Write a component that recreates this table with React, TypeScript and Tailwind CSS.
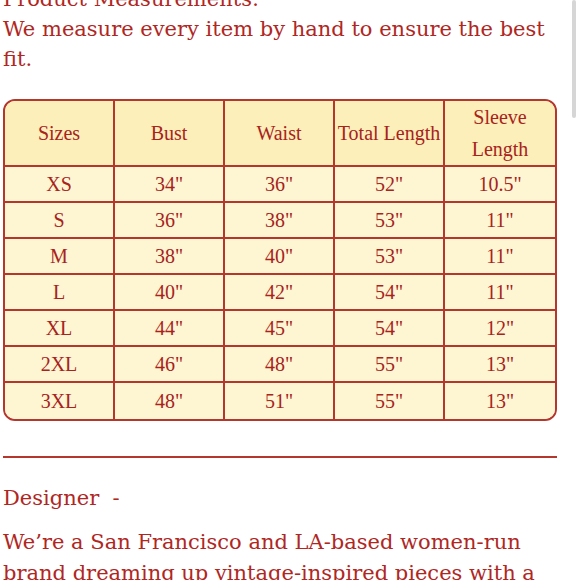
const rows = [
  ["XS", '34"', '36"', '52"', '10.5"'],
  ["S", '36"', '38"', '53"', '11"'],
  ["M", '38"', '40"', '53"', '11"'],
  ["L", '40"', '42"', '54"', '11"'],
  ["XL", '44"', '45"', '54"', '12"'],
  ["2XL", '46"', '48"', '55"', '13"'],
  ["3XL", '48"', '51"', '55"', '13"'],
]

const headers = ["Sizes", "Bust", "Waist", "Total Length", "Sleeve Length"]

const SizeTable = () => {
  return (
    <div className="w-[554px] rounded-[12px] border-2 border-[#b5362c] overflow-hidden font-['Liberation_Serif',serif] text-[20px] text-[#a8231c]">
      <div className="grid grid-cols-5 bg-[#fdefba]">
        {headers.map((h, i) => (
          <div
            key={h}
            className={`h-[66px] flex items-center justify-center text-center leading-[32px] border-b-2 border-[#b5362c] ${i < 4 ? "border-r-2" : ""}`}
          >
            {h === "Sleeve Length" ? (
              <span>
                Sleeve
                <br />
                Length
              </span>
            ) : (
              h
            )}
          </div>
        ))}
      </div>
      <div className="bg-[#fef6d3]">
        {rows.map((r, ri) => (
          <div key={r[0]} className="grid grid-cols-5">
            {r.map((c, ci) => (
              <div
                key={ci}
                className={`h-[36px] flex items-center justify-center border-[#b5362c] ${ci < 4 ? "border-r-2" : ""} ${ri < rows.length - 1 ? "border-b-2" : ""}`}
              >
                {c}
              </div>
            ))}
          </div>
        ))}
      </div>
    </div>
  )
}

export default function App() {
  return (
    <div className="relative h-[580px] w-[580px] overflow-hidden bg-white text-[#b0271f] font-['DejaVu_Serif',serif]">
      <div className="absolute right-[4px] top-0 h-[118px] w-[4px] rounded-full bg-[#d6d6d6]" />
      <div className="pl-[3px] -mt-[16px] w-[558px] text-[21px] leading-[30px]">
        <p>Product Measurements:</p>
        <p>We measure every item by hand to ensure the best fit.</p>
      </div>
      <div className="pl-[3px] mt-[25px]">
        <SizeTable />
      </div>
      <div className="ml-[3px] mt-[35px] w-[554px] h-[2px] bg-[#b5362c]" />
      <p className="pl-[3px] mt-[25px] text-[21px] leading-[30px]">Designer&nbsp;&nbsp;-</p>
      <p className="pl-[3px] mt-[14px] w-[545px] text-[21px] leading-[31px]">
        We’re a San Francisco and LA-based women-run brand dreaming up vintage-inspired pieces with a
        modern twist.
      </p>
    </div>
  )
}
